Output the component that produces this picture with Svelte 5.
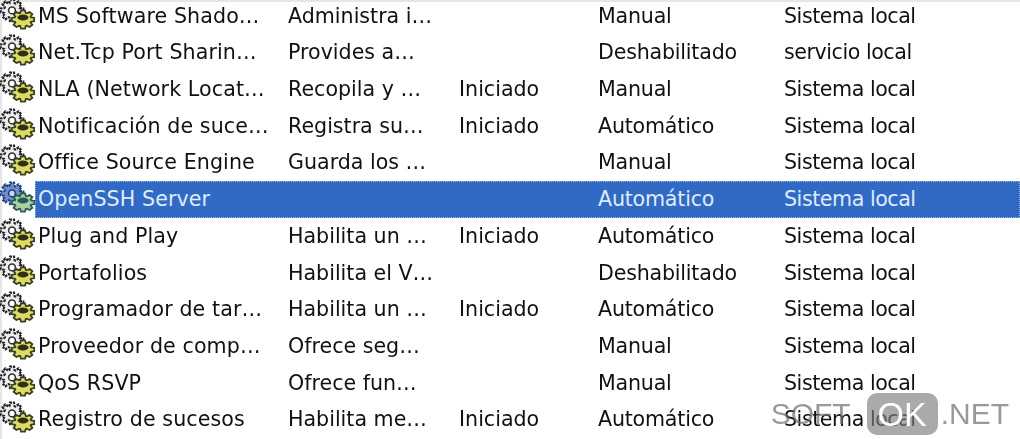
<script>
  const services = [
    ['MS Software Shado…', 'Administra i…', '', 'Manual', 'Sistema local'],
    ['Net.Tcp Port Sharin…', 'Provides a…', '', 'Deshabilitado', 'servicio local'],
    ['NLA (Network Locat…', 'Recopila y …', 'Iniciado', 'Manual', 'Sistema local'],
    ['Notificación de suce…', 'Registra su…', 'Iniciado', 'Automático', 'Sistema local'],
    ['Office Source Engine', 'Guarda los …', '', 'Manual', 'Sistema local'],
    ['OpenSSH Server', '', '', 'Automático', 'Sistema local'],
    ['Plug and Play', 'Habilita un …', 'Iniciado', 'Automático', 'Sistema local'],
    ['Portafolios', 'Habilita el V…', '', 'Deshabilitado', 'Sistema local'],
    ['Programador de tar…', 'Habilita un …', 'Iniciado', 'Automático', 'Sistema local'],
    ['Proveedor de comp…', 'Ofrece seg…', '', 'Manual', 'Sistema local'],
    ['QoS RSVP', 'Ofrece fun…', '', 'Manual', 'Sistema local'],
    ['Registro de sucesos', 'Habilita me…', 'Iniciado', 'Automático', 'Sistema local']
  ];

  // teeth of a gear as one closed outline, squashed by sy
  function gear(cx, cy, outer, inner, teeth, sy) {
    const pts = [];
    const step = (Math.PI * 2) / teeth;
    for (let i = 0; i < teeth; i++) {
      const a = i * step;
      for (const [off, r] of [[-0.3, inner], [-0.16, outer], [0.16, outer], [0.3, inner]]) {
        const t = a + off * step * 1.4;
        pts.push((cx + Math.cos(t) * r).toFixed(1) + ',' + (cy + Math.sin(t) * r * sy).toFixed(1));
      }
    }
    return 'M' + pts.join('L') + 'Z';
  }

  const bigGear = gear(12, 12.4, 11.5, 8, 8, 0.95);
  const smallGear = gear(23, 21.5, 11.5, 8.5, 8, 0.8);
</script>

<div class="window">
  <div class="list">
    {#each services as row, i}
      <div class="row" class:selected={i === 5}>
        <svg class="icon" viewBox="0 0 35 36" width="35" height="36" aria-hidden="true">
          <path d={bigGear} class="gear-back" />
          <circle cx="12" cy="12.4" r="3.4" class="hole" />
          <path d={smallGear} class="gear-front" />
          <ellipse cx="23" cy="19.5" rx="5.5" ry="3" class="hole-front" />
        </svg>
        <div class="cells">
          <span class="name">{row[0]}</span>
          <span>{row[1]}</span>
          <span>{row[2]}</span>
          <span class="start">{row[3]}</span>
          <span class="logon">{row[4]}</span>
        </div>
      </div>
    {/each}
  </div>
  <div class="watermark">
    <span>SOFT</span><span class="ok">OK</span><span>.NET</span>
  </div>
</div>

<style>
  :global(body) {
    margin: 0;
    background: #fff;
  }

  .window {
    position: relative;
    width: 1020px;
    height: 439px;
    overflow: hidden;
    background: #fff;
    box-shadow: inset 2px 2px 0 #e6e6e6;
    font-family: "DejaVu Sans", sans-serif;
    font-size: 20.6px;
    color: #111;
  }

  .list {
    margin-top: -2.8px;
    filter: blur(0.6px);
  }

  .row {
    display: flex;
    align-items: center;
    height: 36.73px;
    white-space: nowrap;
  }

  .icon {
    flex: none;
    width: 35px;
    height: 36px;
  }

  .gear-back {
    fill: #eee;
    stroke: #222;
    stroke-width: 2.2;
    stroke-dasharray: 2.5 1;
  }

  .hole {
    fill: #fff;
    stroke: #333;
    stroke-width: 1.6;
  }

  .gear-front {
    fill: #dcdc62;
    stroke: #3c3c22;
    stroke-width: 1.8;
  }

  .hole-front {
    fill: #2e2e1a;
  }

  .cells {
    flex: 1;
    display: grid;
    grid-template-columns: 253px 171px 139px 186px 1fr;
    align-items: center;
    align-self: stretch;
  }

  .selected .cells {
    background: #316ac5;
    color: #dfeafa;
    outline: 1px dotted #9db8e2;
    outline-offset: -1px;
  }

  .selected .gear-back {
    fill: #6f8fc9;
    stroke: #1f3f7c;
  }

  .selected .hole {
    fill: #c8d6ee;
    stroke: #1f3f7c;
  }

  .selected .gear-front {
    fill: #a9d0a0;
    stroke: #2a5a55;
  }

  .selected .hole-front {
    fill: #2a5a55;
  }

  .name {
    padding-left: 3px;
    letter-spacing: 0.1px;
  }

  .start {
    letter-spacing: -0.2px;
  }

  .logon {
    letter-spacing: -0.45px;
  }

  .watermark {
    position: absolute;
    right: 11px;
    bottom: 4px;
    display: flex;
    align-items: center;
    font-family: "Liberation Sans", sans-serif;
    font-size: 30px;
    line-height: 42px;
    color: rgba(110, 110, 110, 0.7);
    filter: blur(0.3px);
  }

  .ok {
    margin: 0 3px 0 16px;
    width: 71px;
    height: 42px;
    text-align: center;
    border-radius: 10px;
    background: rgba(125, 125, 125, 0.65);
    color: #fff;
    font-size: 34px;
  }
</style>
